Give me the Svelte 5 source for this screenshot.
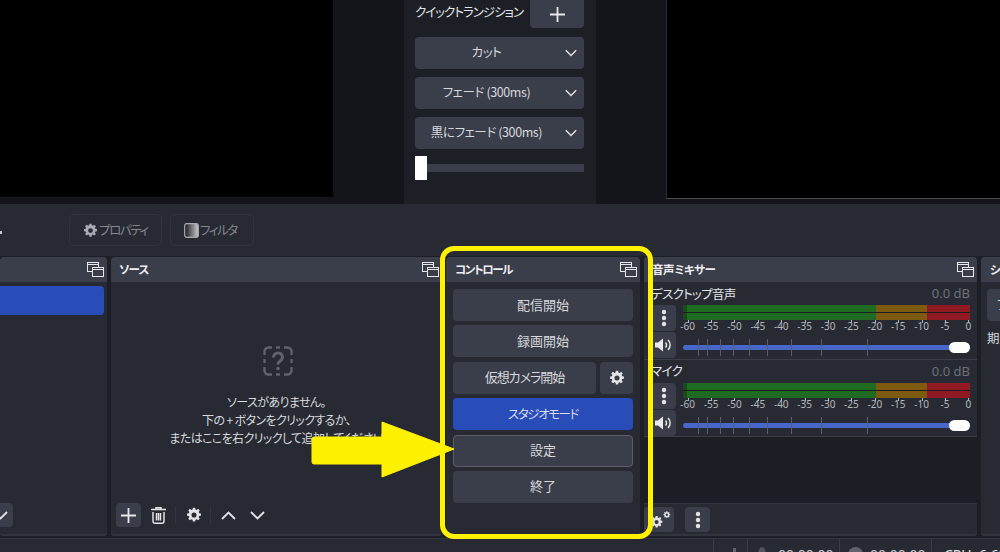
<script lang="ts">
  const scale = ['-60', '-55', '-50', '-45', '-40', '-35', '-30', '-25', '-20', '-15', '-10', '-5', '0'];
  const volumeTicks = [15, 24, 37, 50, 66, 84, 108, 138, 184];
  const strips = ['デスクトップ音声', 'マイク'];
  const transitions = ['カット', 'フェード (300ms)', '黒にフェード (300ms)'];
  const gearPath =
    'M10.3 1h3.4l.5 2.7 1.7.7 2.3-1.6 2.4 2.4-1.6 2.3.7 1.7 2.7.5v3.4l-2.7.5-.7 1.7 1.6 2.3-2.4 2.4-2.3-1.6-1.7.7-.5 2.7h-3.4l-.5-2.7-1.7-.7-2.3 1.6-2.4-2.4 1.6-2.3-.7-1.7-2.7-.5v-3.4l2.7-.5.7-1.7-1.6-2.3 2.4-2.4 2.3 1.6 1.7-.7zM12 8.2a3.8 3.8 0 1 0 0 7.6 3.8 3.8 0 0 0 0-7.6z';
</script>

{#snippet dockIcon()}
  <svg class="dock-icon" viewBox="0 0 17 15" fill="none" stroke="#e8e8ea" stroke-width="1">
    <rect x="0.5" y="0.5" width="11" height="9" />
    <line x1="0.5" y1="2.5" x2="11.5" y2="2.5" />
    <rect x="5.5" y="5.5" width="11" height="9" fill="#3a3d4a" />
    <line x1="5.5" y1="7.5" x2="16.5" y2="7.5" />
  </svg>
{/snippet}

{#snippet gear(size: number)}
  <svg width={size} height={size} viewBox="0 0 24 24"><path d={gearPath} fill="#e4e4e8" fill-rule="evenodd" /></svg>
{/snippet}

{#snippet dots()}
  <svg width="6" height="18" viewBox="0 0 6 18" fill="#e4e4e8">
    <circle cx="3" cy="3" r="2.2" /><circle cx="3" cy="9" r="2.2" /><circle cx="3" cy="15" r="2.2" />
  </svg>
{/snippet}

{#snippet chevron(up: boolean)}
  <svg width="15" height="9" viewBox="0 0 15 9" fill="none" stroke="#e4e4e8" stroke-width="1.8">
    <path d={up ? 'M1 8l6.5-6.5L14 8' : 'M1 1l6.5 6.5L14 1'} />
  </svg>
{/snippet}

<div class="app">
  <section class="top">
    <div class="preview"></div>
    <div class="transitions">
      <div class="quick">
        <span>クイックトランジション</span>
        <button class="plus">
          <svg width="15" height="15" viewBox="0 0 15 15" stroke="#e8e8ea" stroke-width="1.8"><path d="M7.5 0v15M0 7.5h15" /></svg>
        </button>
      </div>
      {#each transitions as name}
        <div class="select">
          <span>{name}</span>
          {@render chevron(false)}
        </div>
      {/each}
      <div class="duration">
        <span class="duration-handle"></span>
        <span class="duration-track"></span>
      </div>
    </div>
    <div class="preview program"></div>
  </section>

  <section class="toolbar">
    <span class="stray"></span>
    <button class="tool">
      <svg width="15" height="15" viewBox="0 0 24 24"><path d={gearPath} fill="#a9abb3" fill-rule="evenodd" /></svg>
      <span>プロパティ</span>
    </button>
    <button class="tool">
      <svg width="15" height="15" viewBox="0 0 15 15">
        <defs>
          <linearGradient id="fade"><stop offset="0" stop-color="#17181d" /><stop offset="1" stop-color="#c8c9cd" /></linearGradient>
        </defs>
        <rect x="0.7" y="0.7" width="13.6" height="13.6" rx="2" fill="url(#fade)" stroke="#a9abb3" stroke-width="1.2" />
      </svg>
      <span>フィルタ</span>
    </button>
  </section>

  <section class="docks">
    <div class="dock scenes">
      <header>
        <span></span>
        {@render dockIcon()}
      </header>
      <div class="dock-body">
        <div class="scene-row"></div>
      </div>
      <footer class="scene-foot">
        <span class="icon-btn cut-btn">{@render chevron(false)}</span>
      </footer>
    </div>

    <div class="dock sources">
      <header>
        <span>ソース</span>
        {@render dockIcon()}
      </header>
      <div class="dock-body empty">
        <svg class="question" width="30" height="30" viewBox="0 0 30 30" fill="none" stroke="#5f626d" stroke-width="2.4">
          <path d="M9 1.5H5.5a4 4 0 0 0-4 4V9M21 1.5h3.5a4 4 0 0 1 4 4V9M9 28.500H5.5a4 4 0 0 1-4-4V21M21 28.500h3.500a4 4 0 0 0 4-4V21M13 1.500h4M13 28.500h4M1.500 13v4M28.500 13v4" />
          <path d="M10.500 11.500c0-6 9-6 9 -.3 0 3.800-4.500 3.300-4.500 7.300" stroke-width="3" />
          <circle cx="15" cy="22.500" r="1.800" fill="#5f626d" stroke="none" />
        </svg>
        <p>ソースがありません。<br />下の + ボタンをクリックするか、<br />またはここを右クリックして追加してください</p>
      </div>
      <footer class="source-foot">
        <span class="icon-btn raised">
          <svg width="15" height="15" viewBox="0 0 15 15" stroke="#e8e8ea" stroke-width="1.8"><path d="M7.500 0v15M0 7.500h15" /></svg>
        </span>
        <span class="icon-btn">
          <svg width="15" height="17" viewBox="0 0 15 17" fill="none" stroke="#e4e4e8" stroke-width="1.500">
            <path d="M0 2.500h15M5 2.500V.8h5v1.700M2 5v9.500a1.700 1.700 0 0 0 1.700 1.700h7.600a1.700 1.700 0 0 0 1.700-1.700V5M5.500 6v7.500M7.500 6v7.500M9.500 6v7.500" />
          </svg>
        </span>
        <i class="sep"></i>
        <span class="icon-btn">{@render gear(16)}</span>
        <i class="sep"></i>
        <span class="icon-btn">{@render chevron(true)}</span>
        <span class="icon-btn">{@render chevron(false)}</span>
      </footer>
    </div>

    <div class="dock controls">
      <header>
        <span>コントロール</span>
        {@render dockIcon()}
      </header>
      <div class="dock-body control-list">
        <button class="ctl">配信開始</button>
        <button class="ctl">録画開始</button>
        <div class="ctl-row">
          <button class="ctl camera">仮想カメラ開始</button>
          <button class="ctl cam-gear">{@render gear(16)}</button>
        </div>
        <button class="ctl studio">スタジオモード</button>
        <button class="ctl hover">設定</button>
        <button class="ctl">終了</button>
      </div>
    </div>

    <div class="dock mixer">
      <header>
        <span>音声ミキサー</span>
        {@render dockIcon()}
      </header>
      <div class="mixer-body">
        {#each strips as name}
          <div class="strip">
            <div class="strip-head">
              <span class="strip-name">{name}</span>
              <span class="db">0.0 dB</span>
            </div>
            <div class="strip-main">
              <div class="strip-btns">
                <span class="mini-btn">{@render dots()}</span>
                <span class="mini-btn">
                  <svg width="17" height="14" viewBox="0 0 17 14" fill="none">
                    <path d="M0 4.500h3L8 .5v13l-5-4H0z" fill="#e8e8ea" />
                    <path d="M10.500 4.500a3.500 3.500 0 0 1 0 5M13 2a7 7 0 0 1 0 10" stroke="#e8e8ea" stroke-width="1.500" />
                  </svg>
                </span>
              </div>
              <div class="strip-levels">
                <div class="meter">
                  <span class="m-low"></span><span class="m-green"></span><span class="m-amber"></span><span class="m-red"></span>
                </div>
                <div class="scale">
                  {#each scale as n}
                    <span>{n}</span>
                  {/each}
                </div>
                <div class="volume">
                  {#each volumeTicks as t}
                    <i style="left: {t}px"></i>
                  {/each}
                  <b></b>
                </div>
              </div>
            </div>
          </div>
        {/each}
      </div>
      <footer class="mixer-foot">
        <span class="mini-btn gears">
          <svg width="22" height="18" viewBox="0 0 22 18">
            <path d={gearPath} fill="#e4e4e8" fill-rule="evenodd" transform="translate(0 4.500) scale(.55)" />
            <path d={gearPath} fill="#e4e4e8" fill-rule="evenodd" transform="translate(13 0) scale(.32)" />
          </svg>
        </span>
        <span class="mini-btn menu">{@render dots()}</span>
      </footer>
    </div>

    <div class="dock transition-dock">
      <header>
        <span>シーントランジション</span>
      </header>
      <div class="dock-body side">
        <div class="ctl side-combo">フェード</div>
        <div class="side-label">期間</div>
      </div>
    </div>
  </section>

  <section class="status">
    <i></i>
    <svg class="bars" width="14" height="14" viewBox="0 0 14 14" fill="#5f626d"><path d="M2 10h3v4H2zM6 6h3v8H6z" /></svg>
    <i></i>
    <span class="st-dot small"></span>
    <span class="st-time">00:00:00</span>
    <i></i>
    <span class="st-dot"></span>
    <span class="st-time">00:00:00</span>
    <i></i>
    <span class="st-cpu">CPU: 6.6%</span>
  </section>

  <div class="ring"></div>
  <svg class="arrow" width="146" height="60" viewBox="0 0 146 60">
    <path d="M3 17h68V2l72 27-72 28V44H3a2 2 0 0 1-2-2V19a2 2 0 0 1 2-2z" fill="#fff200" stroke="#fff200" stroke-width="1" stroke-linejoin="round" />
  </svg>
</div>

<style>
  :global(body) {
    margin: 0;
    background: #1d1f26;
  }

  .app {
    position: relative;
    width: 1000px;
    height: 552px;
    overflow: hidden;
    display: flex;
    flex-direction: column;
    background: #1d1f26;
    color: #d8d9dd;
    font-family: "Noto Sans CJK JP", "Noto Sans", sans-serif;
    font-size: 12.5px;
    font-feature-settings: "palt";
  }

  button {
    font: inherit;
    font-feature-settings: inherit;
    border: none;
    padding: 0;
    color: inherit;
  }

  .top {
    height: 204px;
    flex: none;
    display: flex;
    background: #14151b;
  }

  .preview {
    flex: none;
    width: 333px;
    height: 197px;
    background: #000;
  }

  .program {
    width: 334px;
    height: 199px;
    margin-left: 70px;
    border-left: 1px solid #2a2c34;
    border-bottom: 1px solid #4a4c54;
    box-sizing: border-box;
  }

  .transitions {
    flex: none;
    width: 169px;
    padding: 0 12px 0 11px;
    margin-left: 71px;
    background: #1d1f26;
    display: flex;
    flex-direction: column;
    gap: 8px;
  }

  .quick {
    height: 29px;
    display: flex;
    justify-content: space-between;
    color: #e4e4e8;
    line-height: 24px;
    white-space: nowrap;
    letter-spacing: -1px;
  }

  .plus {
    width: 54px;
    height: 28px;
    border-radius: 0 0 4px 4px;
    background: #3a3d4a;
    display: flex;
    align-items: center;
    justify-content: center;
  }

  .select {
    position: relative;
    height: 32px;
    box-sizing: border-box;
    border-radius: 4px;
    background: #3a3d4a;
    display: flex;
    align-items: center;
    justify-content: center;
    padding: 0 26px 3px 0;
    letter-spacing: -0.4px;
  }

  .select svg {
    position: absolute;
    right: 7px;
    top: 12px;
    width: 12px;
    height: 8px;
  }

  .duration {
    height: 24px;
    margin-top: -1px;
    display: flex;
    align-items: center;
  }

  .duration-handle {
    width: 12px;
    height: 24px;
    background: #fff;
  }

  .duration-track {
    flex: 1;
    height: 8px;
    background: #3a3d4a;
  }

  .toolbar {
    height: 52px;
    flex: none;
    box-sizing: border-box;
    padding: 10px 0 0 69px;
    display: flex;
    align-items: flex-start;
    gap: 8px;
    background: #272a33;
    position: relative;
  }

  .stray {
    position: absolute;
    left: 0;
    top: 27px;
    width: 2px;
    height: 3px;
    background: #c8c9cd;
  }

  .tool {
    height: 32px;
    padding: 0 0 2px 13px;
    border: 1px solid #31343e;
    border-radius: 5px;
    background: #272a33;
    color: #85878f;
    display: flex;
    align-items: center;
    gap: 1px;
    box-sizing: border-box;
    white-space: nowrap;
    letter-spacing: -1.4px;
  }

  .tool svg {
    margin-top: 2px;
  }

  .tool:first-of-type {
    width: 93px;
  }

  .tool:last-of-type {
    width: 84px;
  }

  .docks {
    flex: none;
    height: 279px;
    margin-top: 1px;
    display: flex;
    gap: 4px;
  }

  .dock {
    flex: none;
    display: flex;
    flex-direction: column;
    background: #272a33;
    border-radius: 4px 4px 3px 3px;
    border-bottom: 2px solid #31343e;
    box-sizing: border-box;
    overflow: hidden;
  }

  .dock header {
    flex: none;
    height: 25px;
    padding: 0 3px 2px 8px;
    box-sizing: border-box;
    background: #3a3d4a;
    color: #eeeef0;
    display: flex;
    align-items: center;
    justify-content: space-between;
    font-weight: 700;
    font-size: 11.5px;
    letter-spacing: -0.8px;
    white-space: nowrap;
  }

  .dock-icon {
    width: 17px;
    height: 15px;
    flex: none;
    margin-top: 2px;
  }

  .dock-body {
    flex: 1;
    min-height: 0;
  }

  .scenes {
    width: 107px;
  }

  .scene-row {
    height: 29px;
    margin: 4px 3px 0 0;
    background: #284cb8;
    border-radius: 0 4px 4px 0;
  }

  .scene-foot,
  .source-foot {
    flex: none;
    height: 31px;
    display: flex;
    align-items: flex-start;
  }

  .icon-btn {
    width: 25px;
    height: 24px;
    border-radius: 4px;
    display: flex;
    align-items: center;
    justify-content: center;
    flex: none;
  }

  .cut-btn {
    width: 13px;
    background: #3a3d4a;
    justify-content: flex-end;
    overflow: hidden;
    border-radius: 0 4px 4px 0;
  }

  .cut-btn svg {
    flex: none;
    margin-right: 5px;
  }

  .sources {
    width: 331px;
  }

  .empty {
    display: flex;
    flex-direction: column;
    align-items: center;
    padding-top: 64px;
    box-sizing: border-box;
  }

  .question {
    flex: none;
    margin-left: 2px;
  }

  .empty p {
    margin: 17px 0 0;
    text-align: center;
    line-height: 18px;
    white-space: nowrap;
    color: #d8d9dd;
    font-size: 12px;
    letter-spacing: -0.6px;
  }

  .source-foot {
    padding-left: 5px;
  }

  .source-foot .icon-btn:nth-child(2) {
    margin-left: 5px;
  }

  .raised {
    background: #3a3d4a;
  }

  .sep {
    width: 1px;
    height: 18px;
    margin: 3px 5px 0 4px;
    background: #31343e;
  }

  .source-foot .sep + .icon-btn {
    margin: 0;
  }

  .source-foot .icon-btn:last-child {
    margin-left: 4px;
  }

  .controls {
    width: 194px;
  }

  .controls header {
    padding-left: 9px;
    letter-spacing: -1.4px;
  }

  .control-list {
    padding: 7px 7px 0;
    display: flex;
    flex-direction: column;
    gap: 4.4px;
  }

  .ctl {
    flex: none;
    height: 32px;
    padding-bottom: 2px;
    border-radius: 4px;
    background: #3a3d4a;
    color: #d8d9dd;
    text-align: center;
    box-sizing: border-box;
    width: 100%;
    font-size: 13px;
  }

  .ctl-row {
    display: flex;
    gap: 4px;
  }

  .ctl-row .ctl {
    flex: 1;
    width: auto;
  }

  .camera {
    letter-spacing: -1px;
  }

  .ctl-row .cam-gear {
    flex: none;
    width: 33px;
    padding: 0;
    display: flex;
    align-items: center;
    justify-content: center;
  }

  .studio {
    background: #284cb8;
    color: #d8ddf0;
    font-size: 12.5px;
    letter-spacing: -1.4px;
  }

  .hover {
    border: 1px solid #5a5d6a;
  }

  .mixer {
    width: 333px;
  }

  .mixer header {
    letter-spacing: -0.4px;
  }

  .mixer-body {
    flex: 1;
    min-height: 0;
    background: #1c1e26;
  }

  .strip {
    height: 77.500px;
    box-sizing: border-box;
    padding: 3px 7px 0 7px;
    background: #272a33;
    border-bottom: 1px solid #3a3d47;
  }

  .strip-head {
    height: 20px;
    box-sizing: border-box;
    padding-bottom: 4px;
    display: flex;
    justify-content: space-between;
    align-items: center;
    color: #e4e4e8;
  }

  .strip-name {
    letter-spacing: -0.7px;
  }

  .db {
    color: #6d7079;
    font-size: 13px;
    font-family: "Noto Sans", sans-serif;
  }

  .strip-main {
    display: flex;
    gap: 7px;
  }

  .strip-btns {
    width: 25px;
    flex: none;
    display: flex;
    flex-direction: column;
    gap: 1px;
  }

  .mini-btn {
    width: 25px;
    height: 26px;
    border-radius: 4px;
    background: #3a3d4a;
    display: flex;
    align-items: center;
    justify-content: center;
  }

  .strip-levels {
    flex: 1;
    min-width: 0;
  }

  .meter {
    height: 15px;
    display: flex;
    position: relative;
  }

  .meter::after {
    content: '';
    position: absolute;
    left: 0;
    right: 0;
    top: 7px;
    height: 1px;
    background: #1a1c20;
  }

  .m-low { width: 4px; background: #1a4a1e; }
  .m-green { width: 189px; background: #1f6b22; }
  .m-amber { width: 51px; background: #7c5a10; }
  .m-red { flex: 1; background: #8f1a24; }

  .scale {
    display: flex;
    height: 13px;
    margin-left: -7px;
    font-family: "Noto Sans", sans-serif;
    font-size: 10px;
    line-height: 13px;
    color: #b4b6bc;
  }

  .scale span {
    position: relative;
    flex: none;
    width: 23.400px;
    text-align: center;
  }

  .scale span::before {
    content: '';
    position: absolute;
    left: 50%;
    top: 0;
    width: 1px;
    height: 3px;
    background: #b4b6bc;
  }

  .volume {
    position: relative;
    height: 5px;
    margin-top: 12px;
    background: #4767c9;
    border-radius: 3px;
  }

  .volume i {
    position: absolute;
    top: -6px;
    width: 1px;
    height: 17px;
    background: #5a5d6a;
  }

  .volume b {
    position: absolute;
    right: 0;
    top: -3px;
    width: 21px;
    height: 11px;
    border-radius: 6px;
    background: #fff;
  }

  .mixer-foot {
    flex: none;
    height: 31px;
    box-sizing: border-box;
    padding-top: 3px;
    display: flex;
    gap: 11px;
    border-top: 1px solid #31343e;
  }

  .mixer-foot .gears {
    width: 30px;
    height: 25px;
    justify-content: flex-end;
    padding-right: 2px;
    box-sizing: border-box;
  }

  .mixer-foot .menu {
    height: 25px;
  }

  .transition-dock {
    width: 200px;
  }

  .transition-dock header {
    padding-left: 9px;
  }

  .side {
    padding: 7px 6px;
  }

  .side-combo {
    line-height: 30px;
    text-align: left;
    padding-left: 10px;
  }

  .side-label {
    margin-top: 7px;
    color: #d8d9dd;
  }

  .status {
    flex: none;
    height: 14px;
    margin-top: 2px;
    border-top: 1px solid #31343e;
    display: flex;
    align-items: flex-start;
    background: #272a33;
    padding-left: 713px;
    overflow: hidden;
    white-space: nowrap;
    font-size: 14px;
    line-height: 14px;
    color: #c8c9cd;
  }

  .status i {
    flex: none;
    width: 1px;
    height: 14px;
    background: #3a3d47;
  }

  .bars {
    margin: 3px 6px 0 13px;
    flex: none;
  }

  .st-dot {
    flex: none;
    width: 15px;
    height: 15px;
    margin: 8px 7px 0 8px;
    border-radius: 50%;
    background: #60636c;
  }

  .st-dot.small {
    width: 8px;
    margin: 8px 12px 0 10px;
    background: #50535c;
  }

  .st-time {
    flex: none;
    width: 51px;
    padding: 9px 10px 0 0;
    font-family: "Noto Sans", sans-serif;
  }

  .st-cpu {
    padding: 9px 0 0 12px;
    color: #e4e4e8;
    font-family: "Noto Sans", sans-serif;
  }

  .ring {
    position: absolute;
    left: 440px;
    top: 246px;
    width: 213px;
    height: 293px;
    box-sizing: border-box;
    border: 5px solid #fff200;
    border-radius: 14px;
  }

  .arrow {
    position: absolute;
    left: 311px;
    top: 420px;
  }
</style>
